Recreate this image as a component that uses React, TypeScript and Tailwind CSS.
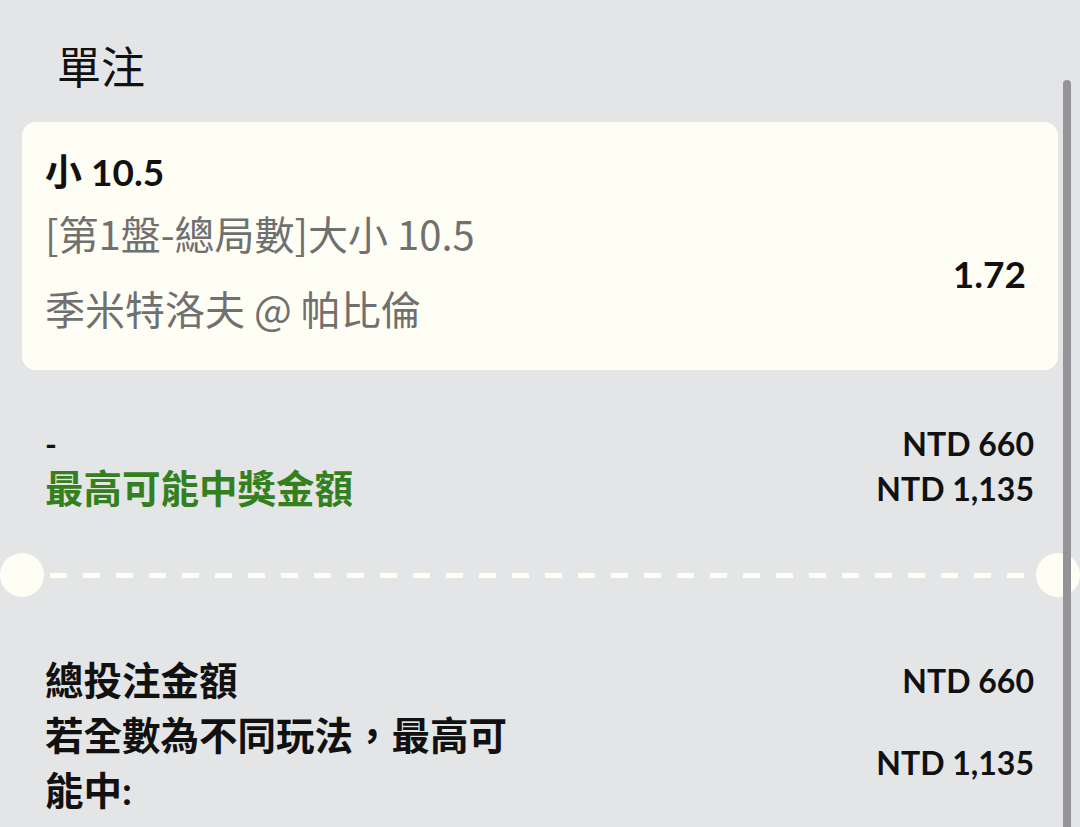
export default function App() {
  return (
    <div
      className="relative h-[827px] overflow-hidden bg-[#e4e5e7] text-[#111]"
      style={{ fontFamily: "Lato, 'Noto Sans CJK TC', sans-serif" }}
    >
      {/* scrollbar */}
      <div className="absolute left-[1063px] top-[80px] h-[800px] w-[8px] rounded-full bg-[#949498]" />

      <h1 className="pl-[57px] pt-[39px] text-[44px] leading-[56px] font-normal">單注</h1>

      {/* selection card */}
      <div className="mx-[22px] mt-[27px] flex justify-between rounded-[14px] bg-[#fffef5] pl-[23px] pr-[32px] pt-[28px] pb-[38px]">
        <div>
          <div className="text-[37px] leading-[44px] font-bold">小 10.5</div>
          <div className="mt-[15px] font-['Noto_Sans_CJK_TC',sans-serif] text-[40px] leading-[48px] text-[#707070]">
            [第1盤-總局數]大小 10.5
          </div>
          <div className="mt-[27px] font-['Noto_Sans_CJK_TC',sans-serif] text-[40px] leading-[48px] text-[#707070]">
            季米特洛夫 @ 帕比倫
          </div>
        </div>
        <div className="mt-[102px] text-[37px] leading-[44px] font-bold">1.72</div>
      </div>

      {/* stake / return */}
      <div className="mt-[52px] pl-[45px] pr-[46px]">
        <div className="flex h-[44px] items-center justify-between">
          <span className="text-[32px] font-bold">-</span>
          <span className="text-[32px] font-bold">NTD 660</span>
        </div>
        <div className="mt-[1px] flex h-[44px] items-center justify-between">
          <span className="text-[38.5px] font-bold text-[#34801f]">最高可能中獎金額</span>
          <span className="text-[32px] font-bold">NTD 1,135</span>
        </div>
      </div>

      {/* ticket divider */}
      <div className="mt-[42px] flex h-[44px] items-center">
        <div className="h-[44px] w-[44px] shrink-0 rounded-full bg-[#fffef5]" />
        <div className="mx-[6px] h-[5px] flex-1 bg-[repeating-linear-gradient(90deg,#fffef5_0_17px,transparent_17px_33px)]" />
        <div className="h-[44px] w-[44px] shrink-0 rounded-full bg-[#fffef5]" />
      </div>

      {/* totals */}
      <div className="mt-[56px] pl-[45px] pr-[46px]">
        <div className="flex items-center justify-between">
          <span className="text-[38.5px] leading-[55px] font-bold">總投注金額</span>
          <span className="text-[32px] font-bold">NTD 660</span>
        </div>
        <div className="flex items-center justify-between">
          <span className="max-w-[475px] text-[38.5px] leading-[55px] font-bold">若全數為不同玩法，最高可能中:</span>
          <span className="text-[32px] font-bold">NTD 1,135</span>
        </div>
      </div>
    </div>
  );
}
